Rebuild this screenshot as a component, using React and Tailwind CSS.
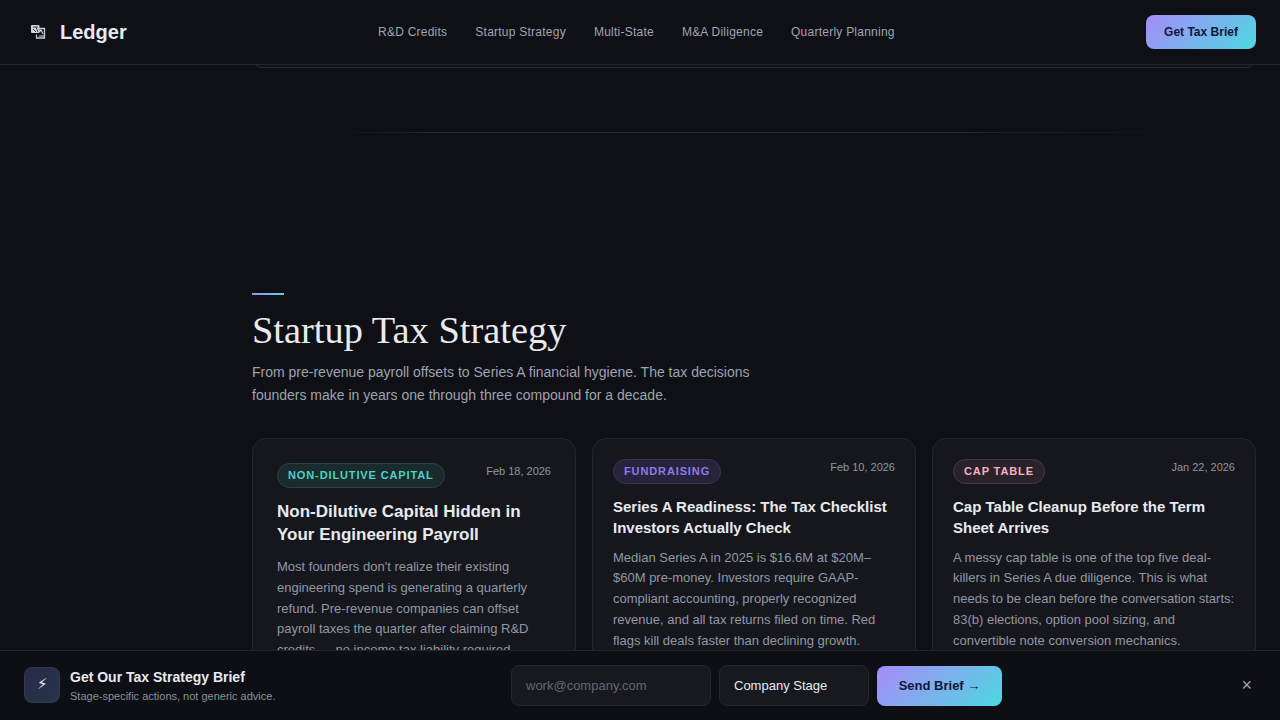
const sans = "font-['Liberation_Sans',Arial,sans-serif]";
const gradient = "bg-[linear-gradient(135deg,#a78bfa,#4dd8e0)]";

function Logo() {
  return (
    <svg width="16" height="15" viewBox="0 0 16 15" fill="none" className="-mt-[2px] shrink-0">
      <rect x="1" y="1" width="8.5" height="8" rx="1" fill="#d6d7dc" />
      <path d="M3 3h5M3 5l3 3M6 3l2 5" stroke="#34363d" strokeWidth="1" />
      <path d="M7 4.5h7.5v9.5H6.5v-3.5" stroke="#c9cad0" strokeWidth="1.3" fill="none" />
      <path d="M9 8l2-2 2 4M9 12h5" stroke="#dcdde1" strokeWidth="1.1" />
    </svg>
  );
}

function Badge({ children, cls }) {
  return (
    <span className={`inline-flex h-[25px] items-center rounded-full border px-[10px] text-[11px] font-bold tracking-[0.88px] ${cls}`}>
      {children}
    </span>
  );
}

function Card({ first, badge, badgeCls, date, title, body }) {
  return (
    <div className={`h-[320px] rounded-[14px] border border-[#23252d] bg-[#15171d] ${first ? "px-6 pt-6" : "px-5 pt-5"}`}>
      <div className="flex items-start justify-between">
        <Badge cls={badgeCls}>{badge}</Badge>
        <span className="text-[11px] leading-[16px] text-[#9095a0]">{date}</span>
      </div>
      <h3 className={`font-bold text-[#e8eaee] ${first ? "mt-[12px] text-[17px] leading-[23px]" : "mt-[12px] text-[15px] leading-[21px]"}`}>
        {title}
      </h3>
      <p className={`text-[13px] leading-[20.8px] text-[#9297a3] ${first ? "mt-[11px]" : "mt-[9.5px]"}`}>{body}</p>
    </div>
  );
}

export default function App() {
  return (
    <div className={`relative h-[720px] w-[1280px] overflow-hidden bg-[#0e1016] ${sans}`}>
      <main className="pl-[252px] pr-6">
        <div className="h-[68px] rounded-b-[10px] border border-[#2a2a45] bg-[#0f1117]" />
        <div className="ml-[80px] mr-[70px] mt-[64px] h-px bg-[linear-gradient(90deg,transparent,#25272f_12%,#25272f_72%,transparent)]" />
        <div className="mt-[160px] h-[2px] w-8 bg-[linear-gradient(90deg,#a78bfa,#4dd8e0)]" />
        <h2 className="mt-[11px] font-['Liberation_Serif',serif] text-[38.4px] font-normal leading-[48px] text-[#e8eaee]">
          Startup Tax Strategy
        </h2>
        <p className="mt-[7px] max-w-[520px] text-[14px] leading-[23px] text-[#9ea3ae]">
          From pre-revenue payroll offsets to Series A financial hygiene. The tax decisions founders make in years one through three compound for a decade.
        </p>
        <div className="mt-[31px] grid grid-cols-3 gap-4">
          <Card
            first
            badge="NON-DILUTIVE CAPITAL"
            badgeCls="border-[#2a4245] bg-[#1a2b2d] text-[#4fd1c5]"
            date="Feb 18, 2026"
            title="Non-Dilutive Capital Hidden in Your Engineering Payroll"
            body="Most founders don't realize their existing engineering spend is generating a quarterly refund. Pre-revenue companies can offset payroll taxes the quarter after claiming R&D credits — no income tax liability required."
          />
          <Card
            badge="FUNDRAISING"
            badgeCls="border-[#393452] bg-[#26233b] text-[#8f7be8]"
            date="Feb 10, 2026"
            title="Series A Readiness: The Tax Checklist Investors Actually Check"
            body="Median Series A in 2025 is $16.6M at $20M–$60M pre-money. Investors require GAAP-compliant accounting, properly recognized revenue, and all tax returns filed on time. Red flags kill deals faster than declining growth."
          />
          <Card
            badge="CAP TABLE"
            badgeCls="border-[#453a44] bg-[#292229] text-[#f4b0c6]"
            date="Jan 22, 2026"
            title="Cap Table Cleanup Before the Term Sheet Arrives"
            body="A messy cap table is one of the top five deal-killers in Series A due diligence. This is what needs to be clean before the conversation starts: 83(b) elections, option pool sizing, and convertible note conversion mechanics."
          />
        </div>
      </main>

      <header className="absolute inset-x-0 top-0 flex h-[65px] items-center justify-between border-b border-[#23242e] bg-[#0e1016] pl-[30px] pr-6">
        <div className="flex w-[320px] items-center gap-[14px]">
          <Logo />
          <span className="text-[20px] font-bold text-[#e8eaee]">Ledger</span>
        </div>
        <nav className="absolute left-[378px] flex gap-7 text-[12px] tracking-[0.24px] text-[#a0a5b0]">
          <span>R&amp;D Credits</span>
          <span>Startup Strategy</span>
          <span>Multi-State</span>
          <span>M&amp;A Diligence</span>
          <span>Quarterly Planning</span>
        </nav>
        <button className={`h-[34px] w-[110px] rounded-lg text-[12px] font-bold text-[#12163f] ${gradient}`}>
          Get Tax Brief
        </button>
      </header>

      <footer className="absolute inset-x-0 bottom-0 flex h-[70px] items-center border-t border-[#23242e] bg-[#0d0f14] pl-6 pr-6">
        <div className="-mt-[2px] flex w-[487px] items-start gap-[10px]">
          <div className="flex h-9 w-9 items-center justify-center rounded-lg border border-[#333a50] bg-[linear-gradient(135deg,#2a2a48,#25354a)] text-[15px] text-[#e6e8ee]">
            ⚡︎
          </div>
          <div className="mt-[1px]">
            <div className="text-[14px] font-bold leading-[18px] text-[#e8eaee]">Get Our Tax Strategy Brief</div>
            <div className="mt-[3px] text-[11px] leading-[14px] text-[#8a8f9a]">Stage-specific actions, not generic advice.</div>
          </div>
        </div>
        <input
          placeholder="work@company.com"
          className="h-[41px] w-[200px] rounded-lg border border-[#25272e] bg-[#17191f] px-[14px] text-[13px] text-[#e8eaee] outline-none placeholder:text-[#636771]"
        />
        <div className="ml-2 flex h-[41px] w-[150px] items-center rounded-lg border border-[#25272e] bg-[#17191f] px-[14px] text-[13px] text-[#e8eaee]">
          Company Stage
        </div>
        <button className={`ml-2 h-[40px] w-[125px] rounded-lg text-[13px] font-bold text-[#12163f] ${gradient}`}>
          Send Brief →
        </button>
        <span className="-mt-[2px] ml-auto mr-[4px] text-[18px] leading-none text-[#9ea3ae]">×</span>
      </footer>
    </div>
  );
}
